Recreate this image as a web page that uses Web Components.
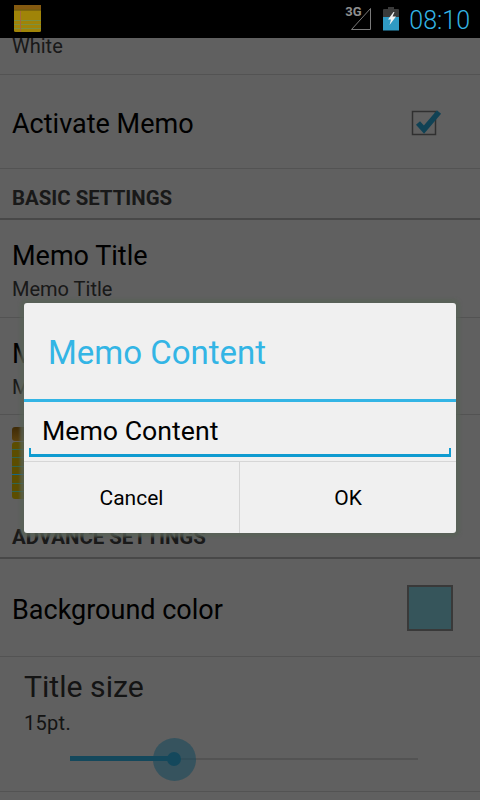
<!DOCTYPE html>
<html>
<head>
<meta charset="utf-8">
<style>
html, body { margin: 0; padding: 0; background: #efefef; }
body { width: 480px; height: 800px; overflow: hidden; font-family: Roboto, "Noto Sans", sans-serif; }
</style>
</head>
<body>
<memo-screen>
  <status-bar></status-bar>
  <pref-row slot="list" summary="White" clip style="--h:37px"></pref-row>
  <pref-row slot="list" title="Activate Memo" style="--h:94px">
    <check-box slot="widget"></check-box>
  </pref-row>
  <pref-section slot="list" title="BASIC SETTINGS"></pref-section>
  <pref-row slot="list" title="Memo Title" summary="Memo Title" style="--h:98px"></pref-row>
  <pref-row slot="list" title="Memo Content" summary="Memo Content"></pref-row>
  <memo-icon-row slot="list"></memo-icon-row>
  <pref-section slot="list" title="ADVANCE SETTINGS"></pref-section>
  <pref-row slot="list" title="Background color" style="--h:98px">
    <color-swatch slot="widget"></color-swatch>
  </pref-row>
  <seek-row slot="list" title="Title size" summary="15pt."></seek-row>
  <memo-dialog slot="dialog" title="Memo Content" value="Memo Content"></memo-dialog>
</memo-screen>

<script>
// whole screen: status bar on top, list below, scrim and dialog over the list
class MemoScreen extends HTMLElement {
  constructor(){
    super();
    this.attachShadow({mode:"open"}).innerHTML = `
    <style>
    :host { display: flex; flex-direction: column; width: 480px; height: 800px; position: relative; overflow: hidden; }
    .list { flex: 1; min-height: 0; display: flex; flex-direction: column; overflow: hidden; }
    .scrim { position: absolute; left: 0; right: 0; top: 38px; bottom: 0; background: rgba(0,0,0,.6); }
    .dialog { position: absolute; left: 24px; top: 303px; z-index: 2; }
    </style>
    <slot></slot>
    <div class="list"><slot name="list"></slot></div>
    <div class="scrim"></div>
    <div class="dialog"><slot name="dialog"></slot></div>`;
  }
}

class StatusBar extends HTMLElement {
  constructor(){
    super();
    this.attachShadow({mode:"open"}).innerHTML = `
    <style>
    :host { display: flex; align-items: center; height: 38px; background: #000; flex: none; position: relative; z-index: 1; }
    .note { margin-left: 14px; display: block; }
    .right { margin-left: auto; display: flex; align-items: center; height: 38px; padding-right: 10px; }
    .net { position: relative; width: 28px; height: 38px; }
    .net svg { position: absolute; left: 5px; top: 7px; }
    .net b { position: absolute; left: 0; top: 5px; font: bold 13px/14px "Liberation Sans Narrow", Roboto, sans-serif; color: #8f8f8f; }
    .batt { display: block; margin: 0 10px 0 10px; }
    .time { font: 300 25px/38px Roboto, sans-serif; color: #33b5e5; padding-top: 3px; }
    </style>
    <svg class="note" width="27" height="28" viewBox="0 0 27 28">
      <rect x="0" y="0" width="27" height="27" rx="1.5" fill="#a08408"/>
      <rect x="0" y="0" width="27" height="4.500" fill="#855a10"/>
      <rect x="0" y="4.500" width="27" height="1" fill="#5e4a10"/>
      <path d="M0 15.500h27M0 19.500h27M0 23.500h27" stroke="#7c9040" stroke-width="1"/>
      <path d="M6.500 6v21" stroke="#a8683a" stroke-width="1"/>
    </svg>
    <div class="right">
      <div class="net">
        <b>3G</b>
        <svg width="22" height="24" viewBox="0 0 22 24"><path d="M1.500 22.500L20.500 1.500V22.500Z" fill="none" stroke="#7a7a7a" stroke-width="1"/></svg>
      </div>
      <svg class="batt" width="16" height="24" viewBox="0 0 16 24">
        <path d="M5 0h6v2h4a1 1 0 0 1 1 1v7H0V3a1 1 0 0 1 1-1h4z" fill="#3a3a3a"/>
        <rect x="0" y="10" width="16" height="13.500" fill="#2f9ac4"/>
        <path d="M10.500 5L5 12.500h3L6.500 18L13 9.500H9.500L11.500 5Z" fill="#f2f2f2"/>
      </svg>
      <span class="time">08:10</span>
    </div>`;
  }
}

// a preference row: title, optional summary, optional widget on the right
class PrefRow extends HTMLElement {
  constructor(){
    super();
    this.attachShadow({mode:"open"});
  }
  connectedCallback(){
    const title = this.getAttribute("title"), summary = this.getAttribute("summary");
    this.shadowRoot.innerHTML = `
    <style>
    :host { display: flex; align-items: center; flex: none; box-sizing: border-box; height: var(--h, 97px); padding: 5px 27px 0 12px; border-bottom: 1px solid #d0d0d0; }
    :host([clip]) { align-items: flex-start; padding-top: 0; }
    .text { flex: 1; min-width: 0; }
    .title { font-size: 27px; line-height: 34px; color: #000; }
    .summary { font-size: 20px; line-height: 28px; margin-top: 2px; color: #404040; }
    :host([clip]) .summary { margin-top: -6px; }
    </style>
    <div class="text">
      ${title ? `<div class="title">${title}</div>` : ""}
      ${summary ? `<div class="summary">${summary}</div>` : ""}
    </div>
    <slot name="widget"></slot>`;
  }
}

class PrefSection extends HTMLElement {
  constructor(){
    super();
    this.attachShadow({mode:"open"});
  }
  connectedCallback(){
    this.shadowRoot.innerHTML = `
    <style>
    :host { display: flex; align-items: flex-end; flex: none; box-sizing: border-box; height: 51px; padding: 0 12px 7px; border-bottom: 2px solid #b4b4b4; font: 700 20.400px/26px Roboto, sans-serif; color: #404040; }
    </style>
    <span>${this.getAttribute("title")}</span>`;
  }
}

class CheckBox extends HTMLElement {
  constructor(){
    super();
    this.attachShadow({mode:"open"}).innerHTML = `
    <style>:host { display: block; width: 30px; height: 30px; margin: -8px 12px 0 0; }
    svg { display: block; overflow: visible; }</style>
    <svg width="30" height="30" viewBox="0 0 30 30">
      <rect x="1.500" y="6.500" width="23" height="23" fill="none" stroke="#787878" stroke-width="1.500"/>
      <path d="M7 18l6 6.500L28 7" fill="none" stroke="#2aa6d4" stroke-width="5.500"/>
    </svg>`;
  }
}

class ColorSwatch extends HTMLElement {
  constructor(){
    super();
    this.attachShadow({mode:"open"}).innerHTML = `
    <style>:host { display: block; box-sizing: border-box; width: 46px; height: 46px; margin-top: -4px; background: #87d4e4; border: 2px solid #909090; }</style>`;
  }
}

// row with the big memo picture, mostly hidden under the dialog.
// the picture is brighter than the scrim would let through, so it sits over it
class MemoIconRow extends HTMLElement {
  constructor(){
    super();
    this.attachShadow({mode:"open"}).innerHTML = `
    <style>
    :host { display: block; flex: none; height: 93px; padding: 12px 0 0 12px; box-sizing: border-box; z-index: 1; }
    svg { display: block; }
    </style>
    <svg width="72" height="72" viewBox="0 0 72 72">
      <defs><linearGradient id="band" x1="0" y1="0" x2="0" y2="1"><stop offset="0" stop-color="#3e2a06"/><stop offset="1" stop-color="#5a400e"/></linearGradient></defs>
      <rect x="0" y="0" width="72" height="14" rx="3" fill="url(#band)"/>
      <rect x="0" y="15" width="72" height="57" rx="3" fill="#5c4d00"/>
      <path d="M0 22.500h72M0 30.500h72M0 39.500h72M0 56.500h72M0 64.500h72" stroke="#2f6450" stroke-width="1"/>
      <path d="M0 47.500h72" stroke="#14688a" stroke-width="1"/>
    </svg>`;
  }
}

class SeekRow extends HTMLElement {
  constructor(){
    super();
    this.attachShadow({mode:"open"});
  }
  connectedCallback(){
    this.shadowRoot.innerHTML = `
    <style>
    :host { display: block; flex: none; box-sizing: border-box; height: 135px; padding: 13px 0 0 24px; border-bottom: 1px solid #d0d0d0; }
    .title { font-size: 30.200px; line-height: 34px; color: #333; }
    .summary { font-size: 20px; line-height: 26px; margin-top: 6px; color: #333; letter-spacing: .3px; }
    .track { position: relative; height: 2px; margin: 22px 0 0 46px; width: 348px; background: #d0d0d0; }
    .fill { position: absolute; left: 0; top: -2px; height: 5px; width: 104px; background: #33b5e5; }
    .halo { position: absolute; left: 83px; top: -20px; width: 43px; height: 43px; border-radius: 50%; background: rgba(51,181,229,.55); }
    .thumb { position: absolute; left: 97px; top: -6px; width: 14px; height: 14px; border-radius: 50%; background: #33b5e5; }
    </style>
    <div class="title">${this.getAttribute("title")}</div>
    <div class="summary">${this.getAttribute("summary")}</div>
    <div class="track"><div class="fill"></div><div class="halo"></div><div class="thumb"></div></div>`;
  }
}

class MemoDialog extends HTMLElement {
  constructor(){
    super();
    this.attachShadow({mode:"open"});
  }
  connectedCallback(){
    this.shadowRoot.innerHTML = `
    <style>
    :host { display: flex; flex-direction: column; width: 432px; height: 230px; box-sizing: border-box; background: #f0f0f0; border-radius: 3px; box-shadow: 0 0 3px 4px rgba(88,98,86,.8); overflow: hidden; }
    .head { flex: none; height: 99px; box-sizing: border-box; padding: 29px 24px 0; border-bottom: 3px solid #33b5e5; font-size: 33px; line-height: 42px; color: #33b5e5; }
    .edit { flex: none; height: 60px; box-sizing: border-box; padding: 0 5px; border-bottom: 1px solid #d6d6d6; }
    .field { height: 55px; box-sizing: border-box; padding: 12px 11px 0; font-size: 26.700px; line-height: 34px; color: #000; border: solid #0f9bd0; border-width: 0 2px 3px; border-image: linear-gradient(to top, #0f9bd0 7px, transparent 7px) 1; }
    .buttons { flex: 1; display: flex; }
    .buttons button { background: none; border: 0; padding: 0; font: 400 21px Roboto, sans-serif; color: #000; }
    .buttons button:first-child { flex: none; width: 215px; }
    .buttons button + button { flex: 1; border-left: 1px solid #d6d6d6; }
    </style>
    <div class="head">${this.getAttribute("title")}</div>
    <div class="edit"><div class="field">${this.getAttribute("value")}</div></div>
    <div class="buttons"><button>Cancel</button><button>OK</button></div>`;
  }
}

customElements.define("memo-screen", MemoScreen);
customElements.define("status-bar", StatusBar);
customElements.define("pref-row", PrefRow);
customElements.define("pref-section", PrefSection);
customElements.define("check-box", CheckBox);
customElements.define("color-swatch", ColorSwatch);
customElements.define("memo-icon-row", MemoIconRow);
customElements.define("seek-row", SeekRow);
customElements.define("memo-dialog", MemoDialog);
</script>
</body>
</html>
